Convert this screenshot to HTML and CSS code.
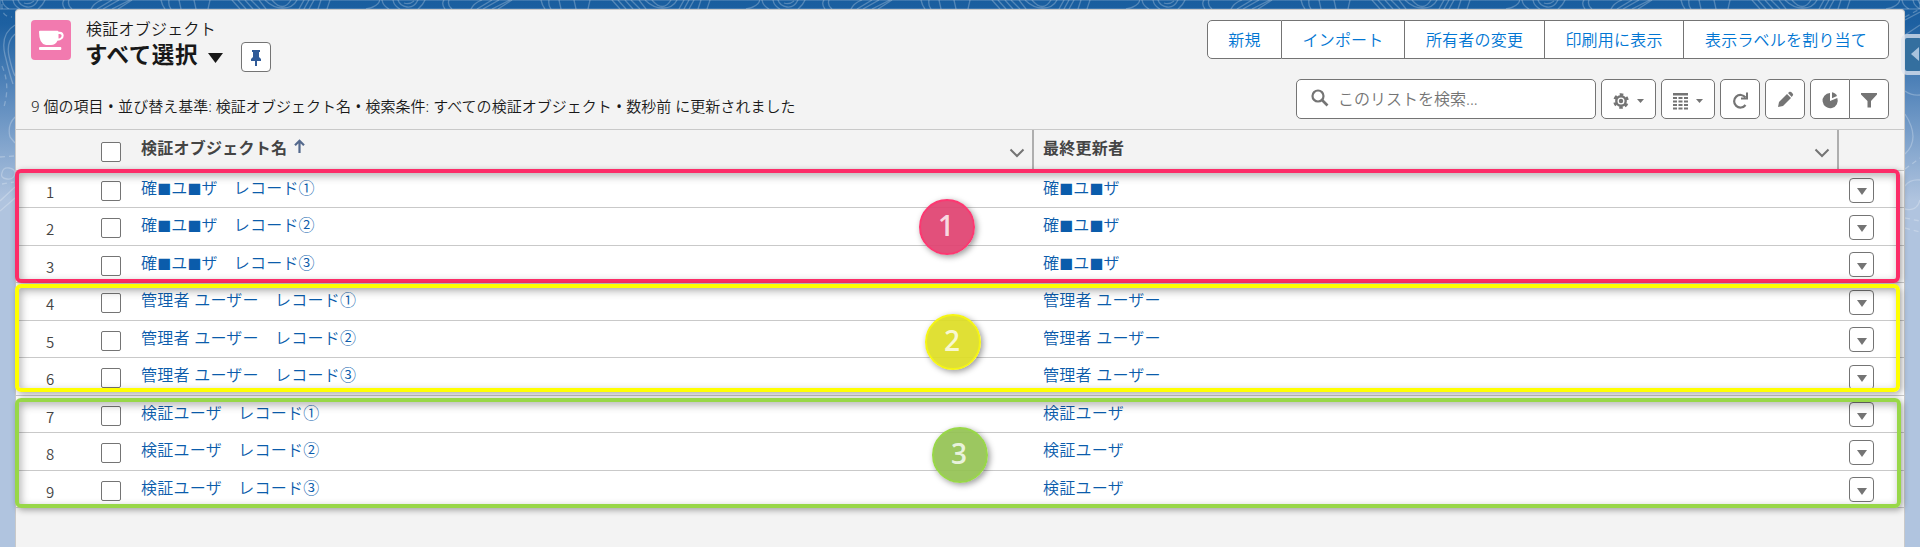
FILE: index.html
```
<!DOCTYPE html>
<html lang="ja">
<head>
<meta charset="utf-8">
<title>検証オブジェクト</title>
<link rel="stylesheet" href="styles.css">
</head>
<body>
<svg class="topo" width="1920" height="240" viewBox="0 0 1920 240" aria-hidden="true">
  <defs>
    <pattern id="strip" width="380" height="9" patternUnits="userSpaceOnUse">
      <path d="M2 0Q3 6 9 9M13 0Q14 6 20 9M18 0Q20 6 27 7T38 0M45 0Q43 5 38 9M24 3Q29 5 34 1M64 0Q61 4 65 9M69 0Q67 5 72 9M91 9Q94 3 102 0M97 9L112 0M103 9L119 0M112 9L130 0M132 0L118 9M161 0Q162 5 165 9M169 0Q168 5 171 9M179 0L181 9M194 0L196 9M210 0L208 9M232 0L240 9M238 0L246 9M245 0L253 9M251 0L260 9M259 0L266 9M265 0Q273 8 283 8T297 0M272 0Q283 13 291 0M304 0L299 9M309 0L304 9M314 0L309 9M321 0L318 9M330 0L327 9M366 9Q378 7 380 0"/>
    </pattern>
  </defs>
  <rect width="1920" height="9" fill="url(#strip)"/>
  <g>
    <path d="M15 25Q0 34 5 55T13 84M15 34Q6 42 9 56T15 76M15 117Q7 125 10 137L15 143M2 173Q3 167 9 168T15 173Q14 180 7 179T2 173M0 201L15 187M0 211L15 198"/>
    <path stroke-dasharray="5 4" d="M2 4Q1 17 12 17M2 66Q11 86 3 110M0 157L14 156M2 184L14 182"/>
    <path d="M1905 20L1920 12M1905 35L1920 25M1905 91Q1912 96 1920 95M1905 114Q1921 139 1905 154M1905 186Q1910 179 1920 180M1905 209Q1917 212 1920 200"/>
    <path stroke-dasharray="5 4" d="M1905 17L1920 9M1905 169L1920 158M1905 218L1920 221M1905 228L1920 232"/>
  </g>
</svg>
<main class="panel">
  <header class="head">
    <div class="title-row">
      <svg class="obj-icon" viewBox="0 0 40 40"><rect width="40" height="40" rx="4" fill="#f27aaf"/><path fill="#fff" d="M8 11.800q0-1 1-1h17.500q1 0 1 1 5-.7 5.200 3.700-.2 4.600-6.300 5.200-2 4.300-6.400 4.300h-5q-7-.8-7-13.200zM27.500 14v4.500q3-.4 3.100-3 0-2-3.100-1.500zM9 27h20.500q.8 0 .8.900v1q0 1-1 1H9q-1 0-1-1v-1q0-.9 1-.9z"/></svg>
      <div class="titles">
        <div class="kind">検証オブジェクト</div>
        <div class="view"><h1>すべて選択</h1><svg class="view-caret" width="15" height="10"><path fill="#181818" d="M0 0h15L7.500 10z"/></svg>
          <button class="pin"><svg width="30" height="30"><path fill="#305b98" d="M11 8h8v2h-1v5l2 2v2h-4v5h-2v-5h-4v-2l2-2v-5h-1z"/></svg></button>
        </div>
      </div>
      <div class="actions"><button>新規</button><button>インポート</button><button>所有者の変更</button><button>印刷用に表示</button><button>表示ラベルを割り当て</button></div>
    </div>
    <div class="tools-row">
      <p class="status">9 個の項目 <i>•</i> 並び替え基準: 検証オブジェクト名 <i>•</i> 検索条件: すべての検証オブジェクト <i>•</i> 数秒前 に更新されました</p>
      <div class="tools">
        <div class="search"><svg width="18" height="18" fill="none" stroke="#747474"><circle cx="7" cy="7" r="5.500" stroke-width="2.200"/><path d="M11 11l5.500 5.500" stroke-width="2.600"/></svg><span>このリストを検索...</span></div>
        <button class="tool gear"><svg width="53" height="38"><g fill="none" stroke="#747474"><circle cx="19" cy="21" r="4.700" stroke-width="2.400"/><circle cx="19" cy="21" r="6.500" stroke-width="2.600" stroke-dasharray="3.400 3.407" transform="rotate(75 19 21)"/></g><circle cx="19" cy="21" r="2.200" fill="#747474"/><path fill="#747474" d="M35 19h7l-3.500 4z"/></svg></button>
        <button class="tool cols"><svg width="52" height="38"><g fill="#747474"><path d="M11 13h15v2.500H11zM34 19h7l-3.500 4z"/></g><g stroke="#747474" stroke-width="2" stroke-dasharray="4 1.500"><path d="M11 18h15M11 21.500h15M11 25h15M11 28.500h15"/></g></svg></button>
        <button class="tool"><svg width="38" height="38"><path fill="none" stroke="#747474" stroke-width="2.200" d="M24.500 17.500A6.300 6.300 0 1 0 24.500 25"/><path fill="none" stroke="#747474" stroke-width="2" d="M26 12.500v6h-6"/></svg></button>
        <button class="tool"><svg width="38" height="38" fill="#747474"><path d="M12 27l1-5 8-8 4 4-8 8zM22 13l1.500-1.200q1-.4 1.700.3l1.600 1.600q.8.900 0 1.800L25.700 17z"/></svg></button>
        <div class="pair"><button><svg width="38" height="38" fill="#747474"><path d="M19 13v8l7.300-3a7.600 7.600 0 1 1-7.300-5z"/><path d="M21 12.300v6l5-2.200q-1.500-3.300-5-3.800z"/></svg></button><button><svg width="38" height="38" fill="#747474"><path d="M11 13h16v1.500L21 21v6.500h-3.500V21L11 14.500z"/></svg></button></div>
      </div>
    </div>
  </header>
  <div class="table">
    <div class="row thead">
      <div class="cell num"></div>
      <div class="cell pick"><span class="box"></span></div>
      <div class="cell name"><span class="label">検証オブジェクト名</span><svg class="sort" width="11" height="14"><path fill="none" stroke="#54698d" stroke-width="2.200" d="M5.500 14V2M1 6.200l4.500-4.500L10 6.200"/></svg><svg class="chev" width="16" height="10"><path d="M1.500 1.500l6.500 6.500 6.500-6.500"/></svg></div>
      <div class="cell owner"><span class="label">最終更新者</span><svg class="chev" width="16" height="10"><path d="M1.500 1.500l6.500 6.500 6.500-6.500"/></svg></div>
      <div class="cell act"></div>
    </div>
    <div class="row"><div class="cell num">1</div><div class="cell pick"><span class="box"></span></div><div class="cell name a"><a>確<b>■</b>ユ<b>■</b>ザ　レコード①</a></div><div class="cell owner a"><a>確<b>■</b>ユ<b>■</b>ザ</a></div><div class="cell act"><button class="menu"></button></div></div>
    <div class="row"><div class="cell num">2</div><div class="cell pick"><span class="box"></span></div><div class="cell name a"><a>確<b>■</b>ユ<b>■</b>ザ　レコード②</a></div><div class="cell owner a"><a>確<b>■</b>ユ<b>■</b>ザ</a></div><div class="cell act"><button class="menu"></button></div></div>
    <div class="row"><div class="cell num">3</div><div class="cell pick"><span class="box"></span></div><div class="cell name a"><a>確<b>■</b>ユ<b>■</b>ザ　レコード③</a></div><div class="cell owner a"><a>確<b>■</b>ユ<b>■</b>ザ</a></div><div class="cell act"><button class="menu"></button></div></div>
    <div class="row"><div class="cell num">4</div><div class="cell pick"><span class="box"></span></div><div class="cell name"><a>管理者 ユーザー　レコード①</a></div><div class="cell owner"><a>管理者 ユーザー</a></div><div class="cell act"><button class="menu"></button></div></div>
    <div class="row"><div class="cell num">5</div><div class="cell pick"><span class="box"></span></div><div class="cell name"><a>管理者 ユーザー　レコード②</a></div><div class="cell owner"><a>管理者 ユーザー</a></div><div class="cell act"><button class="menu"></button></div></div>
    <div class="row"><div class="cell num">6</div><div class="cell pick"><span class="box"></span></div><div class="cell name"><a>管理者 ユーザー　レコード③</a></div><div class="cell owner"><a>管理者 ユーザー</a></div><div class="cell act"><button class="menu"></button></div></div>
    <div class="row"><div class="cell num">7</div><div class="cell pick"><span class="box"></span></div><div class="cell name"><a>検証ユーザ　レコード①</a></div><div class="cell owner"><a>検証ユーザ</a></div><div class="cell act"><button class="menu"></button></div></div>
    <div class="row"><div class="cell num">8</div><div class="cell pick"><span class="box"></span></div><div class="cell name"><a>検証ユーザ　レコード②</a></div><div class="cell owner"><a>検証ユーザ</a></div><div class="cell act"><button class="menu"></button></div></div>
    <div class="row"><div class="cell num">9</div><div class="cell pick"><span class="box"></span></div><div class="cell name"><a>検証ユーザ　レコード③</a></div><div class="cell owner"><a>検証ユーザ</a></div><div class="cell act"><button class="menu"></button></div></div>
  </div>
</main>
<div class="frame pink"></div>
<div class="frame yellow"></div>
<div class="frame green"></div>
<div class="badge b1">1</div>
<div class="badge b2">2</div>
<div class="badge b3">3</div>
<div class="drawer"><svg width="8" height="16"><path fill="#a9c3dd" d="M8 1v14L0 8z"/></svg></div>
</body>
</html>
```
FILE: styles.css
```
* { box-sizing: border-box; }
body {
  margin: 0;
  height: 547px;
  overflow: hidden;
  position: relative;
  padding: 9px 15px 0;
  font: 350 16px/24px "Noto Sans", "Noto Sans CJK JP", sans-serif;
  color: #181818;
  background: linear-gradient(#195e9f 0, #1d60a1 24px, #5586bb 90px, #b0c4df 200px);
}
button { font: inherit; padding: 0; margin: 0; background: #fff; border: 1px solid #747474; }
svg { display: block; flex: none; }
.topo { position: absolute; left: 0; top: 0; fill: none; stroke: #fff; stroke-opacity: .25; stroke-width: 1.3; }
.panel {
  position: relative;
  height: 538px;
  background: #f3f3f3;
  border: 1px solid #c9c9c9;
  border-bottom: 0;
  border-radius: 4px 4px 0 0;
}
.head { height: 119px; padding: 10px 15px 0; }
.title-row { display: flex; height: 59px; }
.obj-icon { width: 40px; height: 40px; margin-right: 15px; }
.kind { height: 19px; line-height: 18px; letter-spacing: .25px; }
.view { display: flex; align-items: flex-start; }
h1 { margin: 1px 0 0 -1px; font-size: 22.500px; line-height: 30px; font-weight: 700; letter-spacing: .6px; }
.view-caret { margin: 14px 18px 0 10px; }
.pin { width: 30px; height: 30px; margin-top: 3px; border-radius: 4px; }
.pin svg { margin: -1px; }
.actions { display: grid; grid-template-columns: 75px 123px 140px 139px 205px; height: 39px; margin-left: auto; }
.actions button { color: #0176d3; border-left-width: 0; white-space: nowrap; letter-spacing: .2px; }
.actions button:first-child { border-left-width: 1px; border-radius: 5px 0 0 5px; }
.actions button:last-child { border-radius: 0 5px 5px 0; }
.tools-row { display: flex; justify-content: space-between; }
.status { margin: 15px 0 0; font-size: 15px; white-space: nowrap; letter-spacing: .02px; }
.status i { font: 400 15px/1 "Noto Sans", sans-serif; margin: 0 .5px; }
.tools { display: flex; gap: 5px; height: 40px; }
.search { width: 300px; display: flex; align-items: center; gap: 8px; padding-left: 15px; background: #fff; border: 1px solid #747474; border-radius: 5px; color: #747474; }
.search svg { margin: -1px 1px 1px -1px; }
.tool { width: 40px; border-radius: 5px; }
.gear { width: 55px; }
.cols { width: 54px; }
.pair { display: flex; }
.pair button { width: 40px; border-radius: 5px 0 0 5px; }
.pair button + button { width: 39px; border-left: 0; border-radius: 0 5px 5px 0; }
.table { border-top: 1px solid #c9c9c9; }
.row { display: grid; grid-template-columns: 70px 55px 893px 805px 65px; height: 37.440px; background: #fff; border-bottom: 1px solid #c9c9c9; }
.thead { height: 41px; background: #f3f3f3; font-weight: 700; color: #444; }
.cell { display: flex; white-space: nowrap; }
.num { justify-content: center; padding: 9px 2px 0 0; font: 350 15px/24px "Noto Sans CJK JP", sans-serif; color: #444; }
.pick { padding: 10px 0 0 15px; }
.box { width: 20px; height: 20px; border: 1px solid #747474; border-radius: 2px; background: #fff; }
.row .label { letter-spacing: .25px; }
.row a { color: #0b5cab; line-height: 24px; padding-top: 5px; letter-spacing: .25px; }
.row .a a { letter-spacing: .2px; }
.a b { display: inline-block; width: 14px; font-size: 14px; font-weight: 350; }
.owner { padding-left: 9px; }
.thead .pick { padding-top: 12px; }
.thead .name, .thead .owner { border-right: 2px solid #aeaeae; padding-top: 6px; }
.sort { margin: 3px 0 0 7px; }
.chev { margin: 12px 7px 0 auto; fill: none; stroke: #747474; stroke-width: 2; }
.act { padding: 6.500px 0 0 10px; }
.menu { width: 25px; height: 25px; border-radius: 4px; display: grid; place-items: center; }
.menu::before { content: ""; margin-top: 3px; border: 5.500px solid transparent; border-top: 7px solid #747474; border-bottom: 0; }
.frame { position: absolute; left: 15px; width: 1885px; border: 4px solid; border-radius: 6px; box-shadow: 2px 2px 6px rgba(0,0,0,.35), inset 2px 3px 8px rgba(0,0,0,.3); }
.pink { top: 169px; height: 114px; border-color: #fc2c68; }
.yellow { top: 284px; height: 108px; border-color: #ff0; }
.green { top: 398px; height: 110px; width: 1886px; border-color: #98d748; }
.badge { position: absolute; width: 56px; height: 56px; border-radius: 50%; border: 2px solid; padding-right: 2px; text-align: center; color: rgba(255,255,255,.8); font: 600 28px/48px "Open Sans", sans-serif; box-shadow: 2px 2px 6px rgba(0,0,0,.4); }
.b1 { left: 919px; top: 199px; background: rgba(224,67,113,.93); border-color: #fc3871; }
.b2 { left: 925px; top: 314px; background: rgba(222,222,38,.93); border-color: #f5f514; }
.b3 { left: 932px; top: 427px; background: rgba(149,195,84,.93); border-color: #98d748; }
.drawer { position: absolute; left: 1901px; top: 34px; width: 24px; height: 41px; border: 4px solid rgba(224,230,240,.75); border-radius: 6px; background: #346f9f padding-box; padding: 8px 0 0 6px; }
```
